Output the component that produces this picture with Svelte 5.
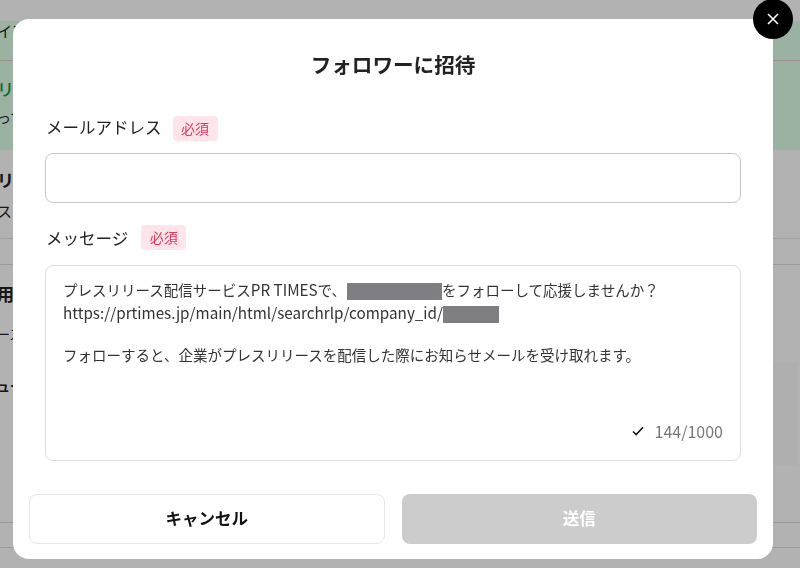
<script>
	const message = 144;
	const limit = 1000;
</script>

<!-- Page behind the dialog, only its left edge shows -->
<div class="page">
	<div class="top"></div>
	<section class="notice">
		<div class="notice-head"><span class="clip">イア</span></div>
		<div class="notice-title"><span class="clip">リ</span></div>
		<div class="notice-text"><span class="clip">って</span></div>
	</section>
	<section class="block">
		<div class="block-title"><span class="clip">リ</span></div>
		<div class="block-text"><span class="clip">スト</span></div>
	</section>
	<div class="thin"></div>
	<section class="usage">
		<div class="usage-title"><span class="clip">用面</span></div>
		<div class="usage-text"><span class="clip">ース</span></div>
		<div class="usage-item"><span class="clip">ュー</span></div>
		<div class="side"></div>
	</section>
	<div class="last"></div>
	<div class="tail">ー</div>
</div>

<div class="overlay">
	<div class="modal">
		<button class="close" aria-label="閉じる">
			<svg width="14" height="14" viewBox="0 0 14 14">
				<path d="M2 2 12 12M12 2 2 12" stroke="#fff" stroke-width="1.6" fill="none" />
			</svg>
		</button>

		<h2>フォロワーに招待</h2>

		<div class="form">
			<div class="label">
				<label for="email">メールアドレス</label>
				<span class="required">必須</span>
			</div>
			<input id="email" type="text" />

			<div class="label second">
				<span>メッセージ</span>
				<span class="required">必須</span>
			</div>
			<div class="textarea">
				<p>
					プレスリリース配信サービス<span class="latin">PR TIMES</span>で、<span class="redact name"></span>をフォローして応援しませんか？<br />
					<span class="latin">https://prtimes.jp/main/html/searchrlp/company_id/</span><span class="redact id"></span>
				</p>
				<p class="follow">フォローすると、企業がプレスリリースを配信した際にお知らせメールを受け取れます。</p>
				<div class="count">
					<svg width="12" height="10" viewBox="0 0 12 10">
						<path d="M1 5.5 4.2 8.6 11 1.2" stroke="#111" stroke-width="1.5" fill="none" />
					</svg>
					<span>{message}/{limit}</span>
				</div>
			</div>
		</div>

		<div class="actions">
			<button class="btn cancel">キャンセル</button>
			<button class="btn send" disabled>送信</button>
		</div>
	</div>
</div>

<style>
	:global(body) {
		margin: 0;
		background: #fff;
		font-family: 'Noto Sans CJK JP', 'Noto Sans', sans-serif;
		overflow: hidden;
	}

	.page {
		height: 568px;
		overflow: hidden;
		color: #222;
		font-size: 16px;
	}

	/* Text of the page runs under the dialog, so it starts off screen */
	.clip {
		display: block;
		margin-left: -3px;
		white-space: nowrap;
	}

	.top {
		height: 21px;
	}

	.notice {
		height: 129px;
		background: #dfffe9;
	}

	.notice-head {
		height: 39px;
		line-height: 20px;
		border-bottom: 1px solid #e4cfd2;
		font-size: 15px;
	}

	.notice-title {
		padding-top: 16px;
		line-height: 24px;
		color: #0a9a46;
		font-weight: 500;
		font-size: 17px;
	}

	.notice-text {
		padding-top: 6px;
		font-size: 14px;
		line-height: 20px;
	}

	.block {
		height: 89px;
		border-bottom: 1px solid #e4e4e4;
		box-sizing: border-box;
		padding-top: 18px;
	}

	.block-title {
		font-weight: 700;
		font-size: 17px;
		line-height: 24px;
	}

	.block-text {
		padding-top: 8px;
		font-size: 15px;
		line-height: 22px;
	}

	.thin {
		height: 26px;
		border-bottom: 1px solid #dcdcdc;
		box-sizing: border-box;
	}

	.usage {
		position: relative;
		height: 258px;
		border-bottom: 1px solid #dcdcdc;
		box-sizing: border-box;
		padding-top: 17px;
	}

	.usage-title {
		font-weight: 700;
		font-size: 17px;
		line-height: 24px;
	}

	.usage-text {
		padding-top: 18px;
		font-size: 13px;
		line-height: 20px;
	}

	.usage-item {
		padding-top: 32px;
		font-size: 13px;
		font-weight: 700;
		line-height: 20px;
	}

	.side {
		position: absolute;
		top: 97px;
		right: 2px;
		width: 24px;
		height: 103px;
		background: #fbfbfb;
	}

	.last {
		height: 25px;
		border-bottom: 1px solid #dcdcdc;
		box-sizing: border-box;
	}

	.tail {
		padding: 14px 0 0 26px;
		font-size: 14px;
		font-weight: 700;
		line-height: 20px;
	}

	.overlay {
		position: fixed;
		inset: 0;
		background: rgba(0, 0, 0, 0.3);
	}

	.modal {
		position: absolute;
		left: 13px;
		top: 19px;
		width: 760px;
		height: 540px;
		box-sizing: border-box;
		background: #fff;
		border-radius: 16px;
		color: #222;
	}

	.close {
		position: absolute;
		top: -20px;
		right: -20px;
		width: 40px;
		height: 40px;
		border: 0;
		padding: 0;
		border-radius: 50%;
		background: #000;
		display: flex;
		align-items: center;
		justify-content: center;
	}

	h2 {
		margin: 0;
		padding-top: 29px;
		text-align: center;
		font-size: 20.6px;
		font-weight: 700;
		line-height: 32px;
	}

	.form {
		padding: 0 32px;
	}

	.label {
		display: flex;
		align-items: center;
		gap: 12px;
		margin-top: 36px;
		height: 25px;
		font-size: 16.5px;
		padding-left: 1px;
	}

	/* First label sits a little above its badge */
	.label label {
		margin-top: -4px;
		margin-right: -1px;
	}

	.label.second {
		margin-top: 22px;
		gap: 13px;
	}

	.required {
		padding: 0 8.5px;
		height: 25px;
		line-height: 25px;
		border-radius: 4px;
		background: #ffe5e9;
		color: #e8335c;
		font-size: 14px;
	}

	input {
		display: block;
		width: 100%;
		height: 50px;
		margin-top: 12px;
		box-sizing: border-box;
		border: 1.5px solid #c8c8c8;
		border-radius: 8px;
		outline: none;
	}

	.textarea {
		position: relative;
		height: 196px;
		margin-top: 15px;
		box-sizing: border-box;
		border: 1px solid #ddd;
		border-radius: 8px;
		padding: 13px 17px;
		font-size: 14.5px;
		line-height: 22.5px;
		color: #333;
	}

	.latin {
		font-size: 15.25px;
		line-height: 1;
	}

	p {
		margin: 0;
	}

	.follow {
		margin-top: 20px;
	}

	.redact {
		display: inline-block;
		height: 17px;
		vertical-align: -4px;
		background: #7f7f83;
	}

	.name {
		width: 95px;
		margin-left: 1px;
	}

	.id {
		width: 56px;
	}

	.count {
		position: absolute;
		right: 17px;
		bottom: 18px;
		display: flex;
		align-items: center;
		gap: 11px;
		color: #777;
		font-size: 16px;
	}

	.actions {
		display: flex;
		justify-content: space-between;
		padding: 0 16px;
		margin-top: 33px;
	}

	.btn {
		width: 355.5px;
		height: 50px;
		padding: 0 0 3px;
		border-radius: 8px;
		font-family: inherit;
		font-size: 16.5px;
		font-weight: 700;
	}

	.cancel {
		background: #fff;
		border: 1px solid #e6e6e6;
		color: #111;
	}

	.send {
		background: #ccc;
		border: 0;
		color: #fff;
	}
</style>
